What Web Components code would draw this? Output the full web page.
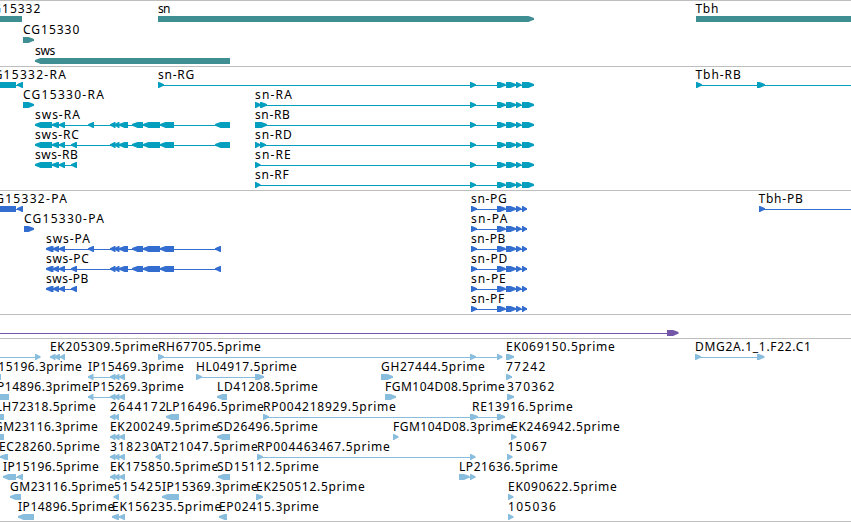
<!DOCTYPE html>
<html lang="en">
<head>
<meta charset="utf-8">
<title>Genome Browser</title>
<style>
  body {
    margin: 0;
    background: #fff;
    overflow: hidden;
  }
</style>
</head>
<body>
<genome-browser></genome-browser>

<script>
// Labels are [text, start, end]; models are [direction, line start, line end, exon starts/ends...].
// Direction is '>' forward, '<' reverse, '=' for a block without an arrow head.
const SN = [470, 476, 497, 505.7, 506, 516, 516, 521.5, 522, 534];
const SN_CDS = ['>', 471, 527, 471, 477, 497, 505.7, 506, 516, 516, 521.5, 522, 527];
const SWS_MID = [110, 115.5, 114, 119.5, 119, 128, 132, 143, 143, 160, 160, 174];
const TRIPLE = [110, 115.5, 114, 119.5, 119, 125];

const TRACKS = [
  {
    name: 'gene', color: '#3f8e94', height: 66, pitch: 21,
    rows: [
      { labels: [['CG15332', -15.5, 40.5], ['sn', 158.5, 170.5], ['Tbh', 696, 718.5]],
        models: [['=', 0, 22, 0, 22], ['>', 158, 534, 158, 534], ['=', 696, 851, 696, 851]] },
      { labels: [['CG15330', 23.5, 79.5]], models: [['>', 23, 34, 23, 34]] },
      { labels: [['sws', 35.5, 55.5]], models: [['<', 35, 230, 35, 230]] }
    ]
  },
  {
    name: 'transcript', color: '#049fbf', height: 124, pitch: 20,
    rows: [
      { labels: [['CG15332-RA', -14.5, 66], ['sn-RG', 158.5, 194.5], ['Tbh-RB', 696, 741]],
        models: [['=', 0, 22, 0, 16], ['<', 17, 23, 17, 23], ['>', 158, 534, 158, 164, ...SN],
          ['>', 696, 851, 696, 702, 757, 765]] },
      { labels: [['CG15330-RA', 23.5, 104], ['sn-RA', 255.5, 292]],
        models: [['>', 23, 34, 23, 34], ['>', 255, 534, 255, 261, 260, 267, ...SN]] },
      { labels: [['sws-RA', 35.5, 80], ['sn-RB', 255.5, 290]],
        models: [['<', 35, 230, 35, 52, 52, 59, 59, 65, 88, 94, ...SWS_MID, 215, 230],
          ['>', 255, 534, 255, 267, ...SN]] },
      { labels: [['sws-RC', 35.5, 79], ['sn-RD', 255.5, 292]],
        models: [['<', 35, 230, 35, 52, 52, 59, 59, 65, 71, 77, ...SWS_MID, 215, 230],
          ['>', 255, 534, 255, 260.5, 260, 266, ...SN]] },
      { labels: [['sws-RB', 35.5, 78], ['sn-RE', 255.5, 291]],
        models: [['<', 35, 77, 35, 52, 52, 59, 59, 65, 71, 77], ['>', 255, 534, 255, 260.5, ...SN]] },
      { labels: [['sn-RF', 255.5, 289]], models: [['>', 255, 534, 255, 260.5, ...SN]] }
    ]
  },
  {
    name: 'cds', color: '#326dcf', height: 124, pitch: 20,
    rows: [
      { labels: [['CG15332-PA', -13, 67], ['sn-PG', 471.5, 507], ['Tbh-PB', 759, 803]],
        models: [['=', 0, 22, 0, 16], ['<', 17, 23, 17, 23], SN_CDS, ['>', 759, 851, 759, 765]] },
      { labels: [['CG15330-PA', 24.5, 104], ['sn-PA', 471.5, 507.5]],
        models: [['>', 24, 34, 24, 34], SN_CDS] },
      { labels: [['sws-PA', 46.5, 90], ['sn-PB', 471.5, 505.5]],
        models: [['<', 46, 221, 46, 53.5, 53, 59, 59, 65, 88, 94, ...SWS_MID, 215, 221], SN_CDS] },
      { labels: [['sws-PC', 46.5, 89], ['sn-PD', 471.5, 507.5]],
        models: [['<', 46, 221, 46, 53.5, 53, 59, 59, 65, 71, 77, ...SWS_MID, 215, 221], SN_CDS] },
      { labels: [['sws-PB', 46.5, 88.5], ['sn-PE', 471.5, 506]],
        models: [['<', 46, 77, 46, 53.5, 53, 59, 59, 65, 71, 77], SN_CDS] },
      { labels: [['sn-PF', 471.5, 504.5]], models: [SN_CDS] }
    ]
  },
  {
    name: 'cdna', color: '#7456a8', height: 24, pitch: 20,
    rows: [{ labels: [], models: [['>', 0, 678, 667, 678.5]] }]
  },
  {
    name: 'est', color: '#88bddd', height: 183, pitch: 20,
    rows: [
      { labels: [['EK205309.5prime', 50.5, 158.5], ['RH67705.5prime', 158.5, 261],
          ['EK069150.5prime', 506.5, 615], ['DMG2A.1_1.F22.C1', 695.5, 811]],
        models: [['>', 0, 40, 35, 40.5], ['<', 50, 65, 50, 55.5, 54, 60, 60, 65],
          ['>', 158, 502, 158, 164, 470, 476, 497, 502.5], ['>', 506, 514, 506, 514],
          ['>', 695, 764, 695, 701, 757, 764.5]] },
      { labels: [['IP15196.3prime', -13.5, 82], ['IP15469.3prime', 88.5, 184], ['HL04917.5prime', 196.5, 297],
          ['GH27444.5prime', 381.5, 485], ['77242', 506.5, 545.5]],
        models: [['=', 0, 1, 0, 1], ['<', 88, 125, 88, 93.5, ...TRIPLE], ['>', 196, 264, 196, 202, 255, 264],
          ['>', 381, 393, 381, 393], ['>', 506, 512, 506, 512]] },
      { labels: [['IP14896.3prime', -7, 88.5], ['IP15269.3prime', 88.5, 184], ['LD41208.5prime', 217.5, 318],
          ['FGM104D08.5prime', 385.5, 505], ['370362', 507.5, 554.5]],
        models: [['=', 0, 9, 0, 9], ['<', 88, 125, 88, 93.5, ...TRIPLE], ['<', 217, 227, 217, 227],
          ['>', 385, 396, 385, 396], ['>', 507, 514, 507, 514]] },
      { labels: [['LH72318.5prime', -4, 96], ['2644172', 110.5, 166], ['LP16496.5prime', 166, 264],
          ['RP004218929.5prime', 263.5, 396], ['RE13916.5prime', 472.5, 573]],
        models: [['=', 0, 4, 0, 4], ['<', 110, 119, 110, 115.5, 114, 119], ['<', 166, 179, 166, 179],
          ['>', 263, 505, 263, 269, 470, 478, 497, 505]] },
      { labels: [['GM23116.3prime', -5.5, 98], ['EK200249.5prime', 110.5, 218.5], ['SD26496.5prime', 217, 318],
          ['FGM104D08.3prime', 393.5, 513], ['EK246942.5prime', 511.5, 620]],
        models: [['=', 0, 4, 0, 4], ['<', 110, 125, ...TRIPLE], ['<', 217, 230, 217, 230],
          ['>', 393, 398, 393, 398.5], ['>', 511, 516, 511, 516.5]] },
      { labels: [['EC28260.5prime', -0.5, 100], ['318230', 110.5, 157.5], ['AT21047.5prime', 156.5, 258],
          ['RP004463467.5prime', 257.5, 390], ['15067', 508, 547]],
        models: [['<', 0, 8, 0, 8], ['<', 110, 125, ...TRIPLE], ['<', 156, 161, 155.5, 161],
          ['>', 257, 475, 257, 263, 470, 475.5], ['>', 507, 512, 507, 512.5]] },
      { labels: [['IP15196.5prime', 3.5, 99], ['EK175850.5prime', 110.5, 218.5], ['SD15112.5prime', 217.5, 319],
          ['LP21636.5prime', 459.5, 558]],
        models: [['<', 3, 23, 3, 16, 17, 23], ['<', 110, 125, ...TRIPLE], ['<', 218, 230, 218, 230],
          ['>', 459, 475, 459, 469.5, 470, 475.5]] },
      { labels: [['GM23116.5prime', 10.5, 114.5], ['515425', 114.5, 161.5], ['IP15369.3prime', 162.5, 258],
          ['EK250512.5prime', 256.5, 365], ['EK090622.5prime', 508.5, 617]],
        models: [['<', 10, 21, 10, 21], ['<', 114, 119, 113.5, 119], ['<', 162, 179, 162, 179],
          ['>', 256, 263, 256, 263], ['>', 508, 513, 508, 513.5]] },
      { labels: [['IP14896.5prime', 18.5, 114.5], ['EK156235.5prime', 112.5, 221.5], ['EP02415.3prime', 219.5, 319],
          ['105036', 508.5, 556]],
        models: [['<', 18, 34, 18, 34], ['<', 112, 125, 112, 119, 119, 125], ['<', 219, 227, 219, 227],
          ['>', 508, 513, 508, 513.5]] }
    ]
  }
];

/** One line of labelled gene models */
class FeatureRow extends HTMLElement {
  constructor() {
    super();
    this.attachShadow({ mode: 'open' });
  }

  set features(data) {
    const labels = data.labels.map(([text, start, end]) =>
      `<text x="${start - 0.5}" y="12" textLength="${end - start + 0.3}" lengthAdjust="spacing">${text}</text>`
    ).join('');

    this.shadowRoot.innerHTML = `
      <style>
        :host { display: block; height: var(--row-pitch); }
        svg { display: block; overflow: visible; }
        text { font: 12px "Noto Sans", "Open Sans", sans-serif; fill: #000; }
        .model { fill: var(--track-color); }
      </style>
      <svg width="851" height="20">
        ${labels}
        <g class="model">${data.models.map(m => this.drawModel(m)).join('')}</g>
      </svg>
    `;
  }

  drawModel([direction, start, end, ...exons]) {
    let out = `<rect x="${start}" y="18" width="${end - start}" height="1" shape-rendering="crispEdges"/>`;
    for (let i = 0; i < exons.length; i += 2) {
      out += `<path d="${this.exonPath(direction, exons[i], exons[i + 1])}"/>`;
    }
    return out;
  }

  // The head keeps a short full-height shoulder, then narrows to a blunt tip
  exonPath(direction, a, b) {
    const head = Math.min(5.5, b - a - 1);
    if (direction === '>') {
      return `M${a} 15H${b - head}L${b - 2} 16.2L${b} 17.3V18.7L${b - 2} 19.6L${b - head} 21H${a}Z`;
    }
    if (direction === '<') {
      return `M${b} 15H${a + head}L${a + 2} 16.2L${a} 17.3V18.7L${a + 2} 19.6L${a + head} 21H${b}Z`;
    }
    return `M${a} 15H${b}V21H${a}Z`;
  }
}

/** Horizontal band with a rule on top, rows are slotted */
class GenomeTrack extends HTMLElement {
  constructor() {
    super();
    this.attachShadow({ mode: 'open' });
    this.shadowRoot.innerHTML = `
      <style>
        :host {
          display: flex;
          flex-direction: column;
          box-sizing: border-box;
          height: var(--track-height);
          border-top: 1px solid #bebebe;
        }
      </style>
      <slot></slot>
    `;
  }
}

class GenomeBrowser extends HTMLElement {
  constructor() {
    super();
    this.attachShadow({ mode: 'open' });
  }

  connectedCallback() {
    this.shadowRoot.innerHTML = `
      <style>
        :host {
          display: flex;
          flex-direction: column;
          width: 851px;
          height: 522px;
          box-sizing: border-box;
          border-bottom: 1px solid #bebebe;
          overflow: hidden;
        }
      </style>
    `;

    TRACKS.forEach(track => {
      const el = document.createElement('genome-track');
      el.setAttribute('name', track.name);
      el.style.setProperty('--track-color', track.color);
      el.style.setProperty('--track-height', `${track.height}px`);
      el.style.setProperty('--row-pitch', `${track.pitch}px`);

      track.rows.forEach(data => {
        const row = document.createElement('feature-row');
        row.features = data;
        el.appendChild(row);
      });

      this.shadowRoot.appendChild(el);
    });
  }
}

customElements.define('feature-row', FeatureRow);
customElements.define('genome-track', GenomeTrack);
customElements.define('genome-browser', GenomeBrowser);
</script>
</body>
</html>
